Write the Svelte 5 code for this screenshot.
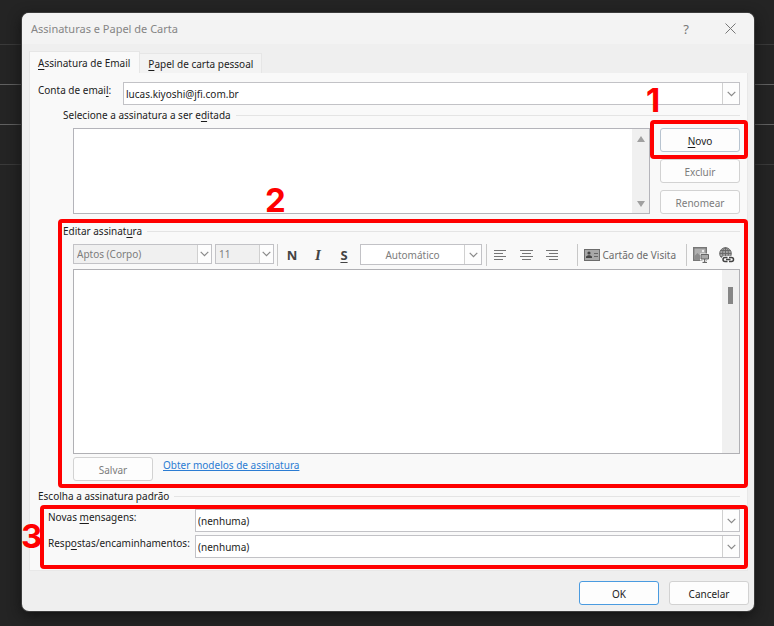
<script lang="ts">
	let accounts = ['lucas.kiyoshi@jfi.com.br'];
	let signatures = ['(nenhuma)'];

	let account = accounts[0];
	let newMessages = signatures[0];
	let replies = signatures[0];
	let font = 'Aptos (Corpo)';
	let size = '11';
	let color = 'Automático';
	let body = '';

	const alignments = [
		{ label: 'Alinhar à esquerda', d: 'M0 1.5h12M0 4.5h9M0 7.5h12M0 10.5h9' },
		{ label: 'Centralizar', d: 'M0 1.5h13M2 4.5h9M0 7.5h13M2 10.5h9' },
		{ label: 'Alinhar à direita', d: 'M0 1.5h12M3 4.5h9M0 7.5h12M3 10.5h9' }
	];
</script>

{#snippet arrow()}
	<span class="arrow">
		<svg width="9" height="6" viewBox="0 0 9 6" aria-hidden="true"><path d="M.7 .8l3.8 3.8L8.3 .8" /></svg>
	</span>
{/snippet}

<svelte:head>
	<title>Assinaturas e Papel de Carta</title>
</svelte:head>

<main>
	<div class="dialog" role="dialog" aria-labelledby="title">
		<header>
			<h1 id="title">Assinaturas e Papel de Carta</h1>
			<button class="help" aria-label="Ajuda">?</button>
			<button class="close" aria-label="Fechar">
				<svg width="11" height="11" viewBox="0 0 11 11" aria-hidden="true"><path d="M.5 .5l10 10M10.5 .5l-10 10" /></svg>
			</button>
		</header>

		<div class="tabs" role="tablist">
			<button class="tab active" role="tab" aria-selected="true"><u>A</u>ssinatura de Email</button>
			<button class="tab" role="tab" aria-selected="false"><u>P</u>apel de carta pessoal</button>
		</div>

		<div class="panel" role="tabpanel">
			<div class="account">
				<label for="account">Conta de emai<u>l</u>:</label>
				<div class="combo">
					<select id="account" bind:value={account}>
						{#each accounts as item}
							<option>{item}</option>
						{/each}
					</select>
					{@render arrow()}
				</div>
			</div>

			<section class="choose">
				<h2><span>Selecione a assinatura a ser e<u>d</u>itada</span></h2>
				<div class="choose-row">
					<div class="list" role="listbox" aria-label="Assinaturas" tabindex="0">
						<div class="list-scroll">
							<svg width="8" height="6" viewBox="0 0 8 6" aria-hidden="true"><path d="M4 0l4 6H0z" /></svg>
							<svg width="8" height="6" viewBox="0 0 8 6" aria-hidden="true"><path d="M0 0h8L4 6z" /></svg>
						</div>
					</div>
					<div class="actions">
						<div class="new">
							<button class="btn"><u>N</u>ovo</button>
							<span class="mark"></span>
							<b class="step one">1</b>
						</div>
						<button class="btn" disabled>Excluir</button>
						<button class="btn" disabled>Renomear</button>
					</div>
				</div>
			</section>

			<section class="edit">
				<span class="mark"></span>
				<b class="step two">2</b>
				<h2><span>Editar assinat<u>u</u>ra</span></h2>
				<div class="toolbar">
					<div class="combo font">
						<select aria-label="Fonte" bind:value={font} disabled><option>Aptos (Corpo)</option></select>
						{@render arrow()}
					</div>
					<div class="combo size">
						<select aria-label="Tamanho" bind:value={size} disabled><option>11</option></select>
						{@render arrow()}
					</div>
					<div class="styles">
						<button class="tool" aria-label="Negrito">N</button>
						<button class="tool italic" aria-label="Itálico">I</button>
						<button class="tool" aria-label="Sublinhado"><u>S</u></button>
					</div>
					<div class="combo color">
						<select aria-label="Cor da fonte" bind:value={color}><option>Automático</option></select>
						{@render arrow()}
					</div>
					<div class="aligns">
						{#each alignments as item}
							<button class="tool" aria-label={item.label}>
								<svg width="13" height="12" viewBox="0 0 13 12" aria-hidden="true"><path d={item.d} stroke="#757575" /></svg>
							</button>
						{/each}
					</div>
					<button class="card">
						<svg width="16" height="12" viewBox="0 0 16 12" aria-hidden="true">
							<rect x=".5" y=".5" width="15" height="11" fill="#a8a8a8" stroke="#6c6c6c" />
							<circle cx="5" cy="4" r="1.6" fill="#444" />
							<path d="M2 9V7.5l2-1.3h2l2 1.3V9z" fill="#444" />
							<path d="M10 4.5h4M10 7.5h4" stroke="#666" />
						</svg>
						Cartão de Visita
					</button>
					<div class="inserts">
						<button class="tool" aria-label="Imagem">
							<svg width="16" height="16" viewBox="0 0 16 16" aria-hidden="true">
								<path d="M.7 .7h12.6v12.6H.7z" fill="#b0b0b0" stroke="#777" stroke-width="1.4" />
								<path d="M1.5 12.5V9l3-3 3 3v3.5z" fill="#8c8c8c" />
								<circle cx="10" cy="4" r="1.2" fill="#eee" />
								<path d="M7 6.5h9v7h-3V16H9.5v-2.5H7z" fill="#f9f9f9" />
								<path d="M8 7.5h7.5V12H8z" fill="#aaa" stroke="#666" />
								<path d="M11.7 12v3M9.5 15.4H14" stroke="#555" />
							</svg>
						</button>
						<button class="tool" aria-label="Hiperlink">
							<svg width="16" height="16" viewBox="0 0 16 16" aria-hidden="true">
								<circle cx="6.5" cy="6.5" r="5.8" fill="#a4a4a4" stroke="#666" />
								<path d="M6.5 .7v11.6M.7 6.5h11.6M1.7 3.5h9.6M1.7 9.5h9.6" stroke="#666" fill="none" stroke-width=".9" />
								<ellipse cx="6.5" cy="6.5" rx="2.9" ry="5.8" fill="none" stroke="#666" stroke-width=".9" />
								<rect x="2.5" y="9" width="13.5" height="7" rx="3" fill="#f9f9f9" />
								<path d="M8.5 10.5H6a2 2 0 0 0 0 4h2.5M10 10.5h2.5a2 2 0 0 1 0 4H10M7 12.5h4.5" fill="none" stroke="#444" stroke-width="1.5" />
							</svg>
						</button>
					</div>
				</div>
				<div class="editor">
					<textarea aria-label="Editar assinatura" bind:value={body}></textarea>
					<div class="editor-scroll"><i></i></div>
				</div>
				<div class="save">
					<button class="btn" disabled>Salvar</button>
					<a href="#modelos">Obter modelos de assinatura</a>
				</div>
			</section>

			<section class="defaults">
				<h2><span>Escolha a assinatura padrão</span></h2>
				<div class="fields">
					<span class="mark"></span>
					<b class="step three">3</b>
					<label for="new-messages">Novas <u>m</u>ensagens:</label>
					<div class="combo">
						<select id="new-messages" bind:value={newMessages}>
							{#each signatures as item}
								<option>{item}</option>
							{/each}
						</select>
						{@render arrow()}
					</div>
					<label for="replies">Resp<u>o</u>stas/encaminhamentos:</label>
					<div class="combo">
						<select id="replies" bind:value={replies}>
							{#each signatures as item}
								<option>{item}</option>
							{/each}
						</select>
						{@render arrow()}
					</div>
				</div>
			</section>
		</div>

		<footer>
			<button class="btn primary">OK</button>
			<button class="btn">Cancelar</button>
		</footer>
	</div>
</main>

<style>
:global(body) {
	margin: 0;
	background: #242424;
}
main {
	min-height: 100vh;
	box-sizing: border-box;
	padding: 13px 20px 15px 22px;
	font-family: 'Noto Sans', 'Open Sans', sans-serif;
	font-size: 10px;
	line-height: 16px;
	color: #1c1c1c;
	/* ruled lines of the window behind the dialog */
	background:
		linear-gradient(#3a3a3a, #3a3a3a) 0 44px / 100% 1px no-repeat,
		linear-gradient(#606060, #606060) 0 84px / 100% 1px no-repeat,
		linear-gradient(#606060, #606060) 0 124px / 100% 1px no-repeat,
		linear-gradient(#3a3a3a, #3a3a3a) 0 164px / 100% 1px no-repeat,
		#242424;
}
button, select, textarea {
	font: inherit;
	color: inherit;
	margin: 0;
	padding: 0;
	border: 0;
	background: none;
	box-sizing: border-box;
}
u {
	text-underline-offset: 2px;
}
.dialog {
	background: #efefef;
	border-radius: 7px;
	box-shadow: 0 0 0 1px #3c3c3c, 0 4px 14px #111;
}
header {
	display: flex;
	align-items: center;
	height: 31px;
	padding: 0 18px 0 9px;
	background: #f3f3f3;
	border-radius: 7px 7px 0 0;
}
h1 {
	flex: 1;
	margin: 0;
	font-size: 11px;
	font-weight: 400;
	color: #858585;
}
.help {
	margin-right: 36px;
	font-size: 13px;
	color: #777;
}
.close {
	display: flex;
}
.close svg {
	stroke: #777;
}
.tabs {
	display: flex;
	align-items: flex-end;
	height: 29px;
	padding-left: 7px;
}
.tab {
	height: 20px;
	padding: 0 8px;
	background: #f3f3f3;
	border: 1px solid #e6e6e6;
	border-left: 0;
	border-bottom: 0;
}
.tab.active {
	height: 22px;
	padding: 0 9px 0 8px;
	background: #f9f9f9;
	border-left: 1px solid #e6e6e6;
}
.panel {
	margin: 0 6px 0 7px;
	padding: 8px 7px 1px 8px;
	background: #f9f9f9;
	border: 1px solid #e8e8e8;
	border-top: 0;
}
.account {
	display: grid;
	grid-template-columns: 85px 1fr;
	padding-top: 1px;
}
.combo {
	position: relative;
	height: 23px;
	box-sizing: border-box;
	background: #fff;
	border: 1px solid #c2c2c6;
}
.combo select {
	display: block;
	width: 100%;
	height: 100%;
	padding: 0 20px 0 2px;
	appearance: none;
	opacity: 1;
}
.arrow {
	position: absolute;
	top: 0;
	right: 0;
	bottom: 0;
	width: 16px;
	display: flex;
	align-items: center;
	justify-content: center;
	background: #fdfdfd;
	border-left: 1px solid #d0d0d0;
	pointer-events: none;
}
.arrow svg {
	fill: none;
	stroke: #888;
	stroke-width: 1.2;
}
h2 {
	display: flex;
	align-items: center;
	gap: 5px;
	height: 16px;
	margin: 0;
	font-size: 10px;
	font-weight: 400;
}
h2::after {
	content: '';
	flex: 1;
	height: 1px;
	background: #e4e4e4;
}
.choose {
	margin-left: 25px;
	padding-top: 2px;
}
.choose-row {
	display: flex;
	gap: 10px;
	margin: 5px 0 0 10px;
}
.list {
	flex: 1;
	display: flex;
	justify-content: flex-end;
	box-sizing: border-box;
	background: #fff;
	border: 1px solid #b4b4ba;
}
.list-scroll {
	width: 17px;
	display: flex;
	flex-direction: column;
	justify-content: space-between;
	align-items: center;
	box-sizing: border-box;
	padding: 7px 0 6px;
	background: #f0f0f0;
}
.list-scroll svg {
	fill: #a0a0a0;
}
.actions {
	width: 80px;
	display: grid;
	gap: 7px;
}
.new {
	position: relative;
}
.btn {
	display: block;
	width: 80px;
	height: 24px;
	padding-top: 1px;
	background: #fdfdfd;
	border: 1px solid #d2d2d2;
	border-radius: 3px;
}
.btn:disabled {
	color: #7c7c7c;
}
.new .btn {
	border-color: #b8c4d0;
}
.primary {
	border-color: #4a9be0;
}
.mark {
	position: absolute;
	z-index: 1;
	border: 4px solid #f00;
	border-radius: 4px;
	pointer-events: none;
}
.new .mark {
	inset: -8px -8px -7px -10px;
}
.edit .mark {
	inset: 0 -8px 0 -5px;
}
.fields .mark {
	inset: 0 -8px 0 -8px;
}
.step {
	position: absolute;
	z-index: 2;
	font-family: Inter, sans-serif;
	font-size: 33px;
	line-height: 40px;
	color: #f00;
}
.one {
	left: -14px;
	top: -48px;
}
.two {
	left: 202px;
	top: -39px;
}
.three {
	left: -27px;
	top: 11px;
}
.edit {
	position: relative;
	margin: 5px 0 0 25px;
	padding: 4px 0 7px;
}
.toolbar {
	display: flex;
	height: 22px;
	margin: 5px 0 3px 10px;
	color: #6c6c6c;
}
.toolbar .combo {
	height: 20px;
}
.toolbar .combo select {
	padding-left: 3px;
	color: #7c7c7c;
}
.toolbar .arrow {
	width: 13px;
}
.font {
	width: 139px;
	margin-right: 3px;
}
.size {
	width: 59px;
	margin-right: 3px;
}
.font, .size {
	background: #f0f0f0;
}
.color {
	width: 122px;
	margin-right: 4px;
}
.toolbar .color {
	height: 21px;
}
.color select {
	text-align-last: center;
}
.toolbar .color .arrow {
	width: 16px;
}
.styles, .aligns, .inserts, .card {
	display: flex;
	align-items: center;
	border-left: 1px solid #c8c8c8;
}
.styles {
	padding: 0 3px 0 1px;
}
.tool {
	display: flex;
	align-items: center;
	justify-content: center;
	width: 26px;
	height: 22px;
}
.styles .tool {
	font-size: 13px;
	font-weight: 700;
	color: #444;
}
.styles .tool.italic {
	font-family: 'Liberation Serif', serif;
	font-size: 15px;
	font-style: italic;
}
.aligns {
	flex: 1;
}
.card {
	gap: 3px;
	padding: 0 10px 0 6px;
}
.inserts {
	padding-left: 1px;
}
.editor {
	display: flex;
	height: 185px;
	margin-left: 10px;
	box-sizing: border-box;
	background: #fff;
	border: 1px solid #b0b0b4;
}
.editor textarea {
	flex: 1;
	padding: 4px;
	resize: none;
	outline: 0;
}
.editor-scroll {
	width: 17px;
	background: #f0f0f0;
}
.editor-scroll i {
	display: block;
	width: 5px;
	height: 17px;
	margin: 17px 0 0 6px;
	background: #868686;
}
.save {
	display: flex;
	gap: 10px;
	margin: 3px 0 0 10px;
}
a {
	color: #2b7cd3;
}
.fields {
	position: relative;
	display: grid;
	grid-template-columns: 147px 1fr;
	row-gap: 3px;
	margin: 1px 0 0 10px;
	padding: 4px 0 11px;
}
footer {
	display: flex;
	justify-content: flex-end;
	gap: 10px;
	padding: 10px 5px 6px;
}
</style>
